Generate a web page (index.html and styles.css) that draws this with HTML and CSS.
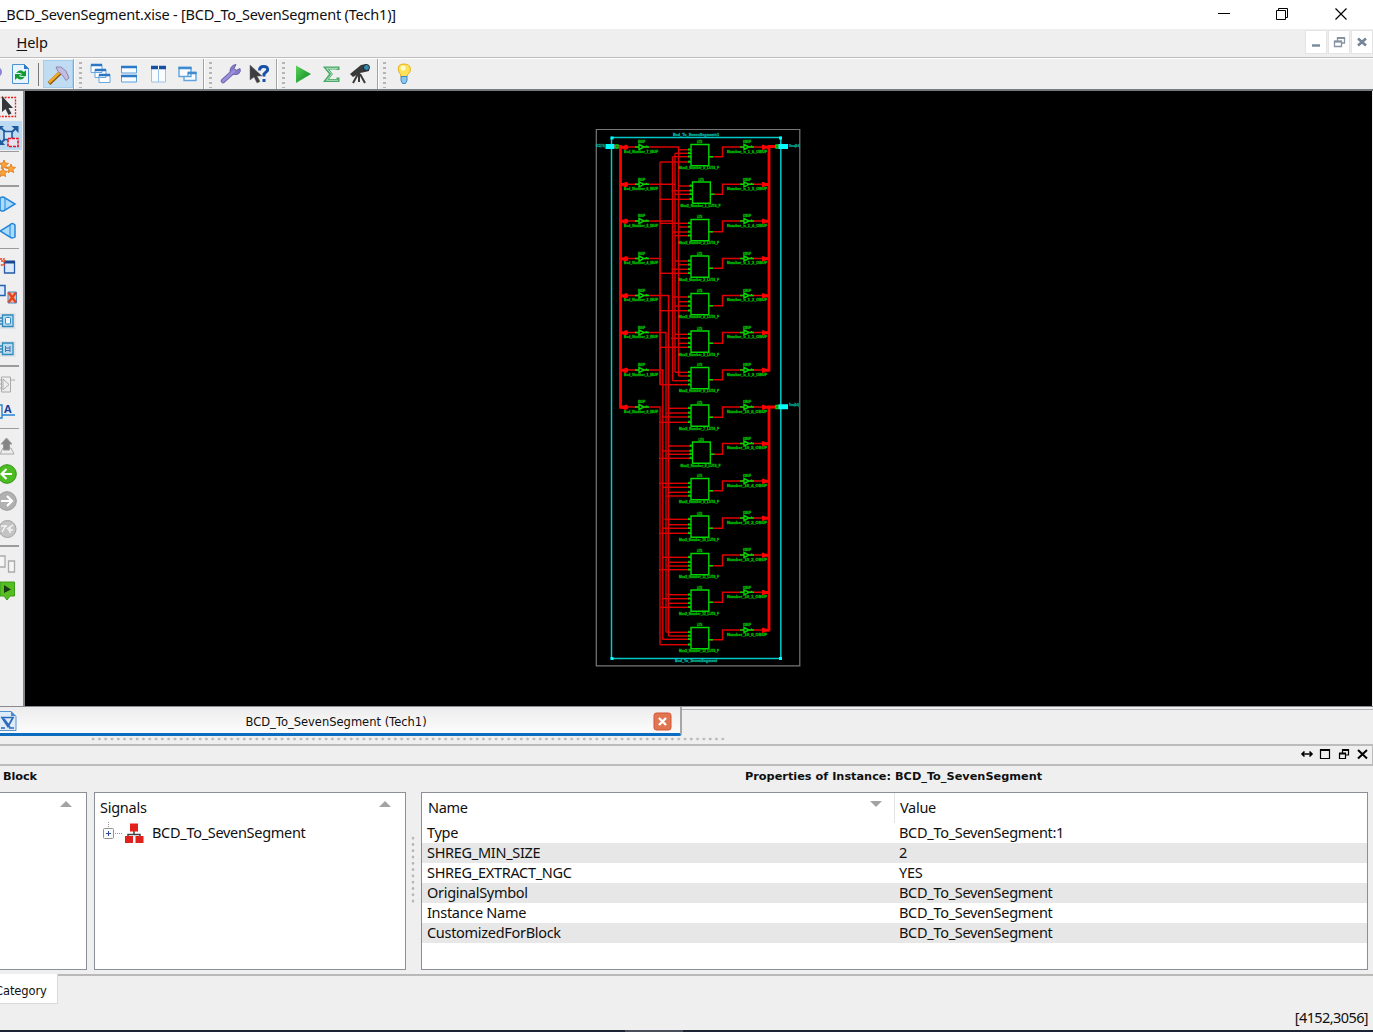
FILE: index.html
```html
<!DOCTYPE html>
<html lang="en">
<head>
<meta charset="utf-8">
<title>BCD_To_SevenSegment (Tech1)</title>
<link rel="stylesheet" href="styles.css">
</head>
<body>
<div class="app">
  <header class="titlebar">
    <span class="title">_BCD_SevenSegment.xise - [BCD_To_SevenSegment (Tech1)]</span>
    <svg class="winbtns" width="173" height="29" fill="none" stroke="#000" stroke-width="1">
      <path d="M18 13.500h12M76.500 10.500h9v9h-9zM78.500 10.500v-2h9v9h-2"/>
      <path d="M135.500 8.500l11 11M146.500 8.500l-11 11" stroke-width="1.200"/>
    </svg>
  </header>
  <nav class="menubar">
    <span class="menu"><u>H</u>elp</span>
    <div class="mdi">
      <svg width="20" height="22"><path d="M6 14.500h8" stroke="#78899a" stroke-width="2.400"/></svg>
      <svg width="20" height="22" fill="none" stroke="#8492a2" stroke-width="1.300"><path d="M5.500 10.500h7v5h-7zM8.500 10V7h7v5h-3"/><path d="M5 10.500h8M8 7h8" stroke-width="2"/></svg>
      <svg width="20" height="22"><path d="M6 7.500l8 7M14 7.500l-8 7" stroke="#758596" stroke-width="2.600"/></svg>
    </div>
  </nav>
  <div class="toolbar">
    <div class="group g1">
      <svg width="42" height="30"><circle cx="-3" cy="13" r="5" fill="#8b83d8"/><path d="M12.500 5.500h12l4 4v15h-16z" fill="#e8f4ff" stroke="#4d93d4"/><path d="M24 5v5h5z" fill="#2d78c4"/><path d="M16 14q4-5 8-1l2-2v6h-6l2-2q-3-2-6-1zM25 17q-3 6-8 2l-2 2v-6h6l-2 2q3 2 6 0z" fill="#139b31"/><path d="M38.500 4v23" stroke="#777"/></svg>
      <span class="active"><svg width="29" height="28"><path d="M5 22.500L16 12" stroke="#8c5a10" stroke-width="4"/><path d="M5 21.500L16 11" stroke="#f0aa28" stroke-width="2.600"/><path d="M12 6l5 0 5 4 3 7-3 2.500-4-6-4-3z" fill="#c3bedf" stroke="#8c86b3"/></svg></span>
    </div>
    <div class="group g2"><i class="handle"></i>
      <svg width="28" height="30" fill="#fff" stroke="#69a6de"><path d="M4 5.500h11v8H4zM8 10.500h11v8H8zM12 15.500h11v8H12z"/><path d="M4 6h11M8 11h11M12 16h11" stroke="#2c76c6" stroke-width="2.400"/></svg>
      <svg width="29" height="30" fill="#f8fcff" stroke="#5f9fdc"><path d="M6.500 8h15v6h-15zM6.500 17h15v6h-15z"/><path d="M6 8h16M6 17h16" stroke="#297ac8" stroke-width="2.400"/></svg>
      <svg width="29" height="30" fill="#f8fcff" stroke="#9ec3e8"><path d="M7.500 8h14v15h-14zM14.500 8v15"/><path d="M7 8.500h15" stroke="#1452a1" stroke-width="3.500"/><path d="M14.500 6.500v4" stroke="#fff"/></svg>
      <svg width="29" height="30" fill="#f8fcff" stroke="#63a3dd" stroke-width="1.400"><path d="M6 8.500h12v9H6zM15 13.500h8v8h-12v-4h4z"/><path d="M5.500 9h13M15 14h8.500" stroke="#3e8bd1" stroke-width="2.400"/></svg>
    </div>
    <div class="group g3"><i class="handle"></i>
      <svg width="28" height="30"><path d="M6 22L17 12" stroke="#6e66b3" stroke-width="4.600" stroke-linecap="round"/><path d="M19 5.500q-6 1-6 7 4 5 9 2 2-2 1-5l-4 2-2-2z" fill="#857bcb" stroke="#6962a9"/><path d="M6 22L17 12" stroke="#9a91da" stroke-width="2.600" stroke-linecap="round"/></svg>
      <svg width="29" height="30"><path d="M5 6v15l4-3 3 6 3-1.500-3-5.500h5z" fill="#3e3e42" stroke="#666" stroke-width=".5"/><path d="M14.500 11.500q0-4 4-4 5 0 4 4l-3.500 3.500v2.500" fill="none" stroke="#1752a8" stroke-width="3"/><path d="M17.500 20h3v3h-3z" fill="#1752a8"/></svg>
    </div>
    <div class="group g4"><i class="handle"></i>
      <svg width="28" height="30"><defs><linearGradient id="go" x2="1" y2="1"><stop stop-color="#5bd25b"/><stop offset="1" stop-color="#07871d"/></linearGradient></defs><path d="M6 6.500l15 8.500-15 9z" fill="url(#go)"/></svg>
      <svg width="29" height="30"><path d="M20 11V9H8l5 6-5 6.500H20V18.500" fill="none" stroke="#4ba96a" stroke-width="3"/><path d="M20 9.300H8.500l5.200 5.700-5.200 6.300H20" fill="none" stroke="#b3e3c1"/></svg>
      <svg width="29" height="30"><path d="M3 15l11-9 5-1 3 3v4l-4 1-5 1-7 4z" fill="#37393b"/><circle cx="19.500" cy="8.500" r="3" fill="#328bb0" stroke="#222"/><path d="M12 14v9M11 15l-5 9M13 15l5 9" stroke="#3b3b3b" stroke-width="2"/></svg>
    </div>
    <div class="group g5"><i class="handle"></i>
      <svg width="29" height="30"><path d="M10 18q0-3-2-5-3-8 5-8 8 0 6 8-3 2-3 5z" fill="#ffe15a" stroke="#e4b21e"/><circle cx="12" cy="9" r="2.500" fill="#fffbd0"/><path d="M10 17.500h6v4l-1.500 3h-3l-1.500-3z" fill="#8cc6ee" stroke="#4089c2"/></svg>
    </div>
  </div>
  <div class="workspace">
    <aside class="side">
      <svg class="tall" viewBox="0 0 24 29"><path d="M-5 5.500h20.500v19H-5" fill="none" stroke="#f01818" stroke-width="1.300" stroke-dasharray="2 1.200"/><path d="M2 4v16l3.500-3 3 6 3-1.500L8.500 16H13z" fill="#33363a"/></svg>
      <svg class="tall on" viewBox="0 0 22 29"><path d="M1 7l16 14M17 6L1 22" stroke="#205a9e" stroke-width="1.800"/><path d="M4 10.500h8v8H4z" fill="#cfe4f8" stroke="#205a9e" stroke-width="1.600"/><path d="M11.500 5h7v7zM-1 5h5l-5 5zM-1 24v-7l6 7z" fill="#205a9e"/><path d="M8 17.500h10v8H8z" fill="#e9e3f0" stroke="#e51522" stroke-width="1.600" stroke-dasharray="3 1"/></svg>
      <hr class="thin">
      <svg viewBox="0 0 24 27.500"><g fill="#fba536" stroke="#dc7413" stroke-width=".8"><path id="star" d="M4 5l1.200 3 3.300.4-2.600 2 .8 3.200L4 12l-2.800 1.600.8-3.200-2.600-2L2.800 8z"/><use href="#star" x="7" y="4"/><use href="#star" x="-1" y="8"/></g></svg>
      <hr>
      <svg viewBox="0 0 24 27.500"><path d="M0 8q3-2 5 0l10 6-10 6q-2 2-5 0z" fill="#a9dbfa" stroke="#2485d8" stroke-width="1.500"/><path d="M5 8v12" stroke="#2485d8"/></svg>
      <svg viewBox="0 0 24 27.500"><path d="M15 8q-3-3-5 0L0 14l10 6q2 2 5 0z" fill="#a9dbfa" stroke="#2485d8" stroke-width="1.500"/><path d="M10 8v12" stroke="#2485d8"/></svg>
      <hr>
      <svg viewBox="0 0 24 27.500"><path d="M4.500 10h10v11h-10z" fill="#dbe9fb" stroke="#275ba6" stroke-width="1.300"/><path d="M4 10h11" stroke="#174795" stroke-width="3"/><path d="M0 7h4v6H0M1 9h5" fill="none" stroke="#e5401c" stroke-width="1.600" stroke-dasharray="2 .8"/></svg>
      <svg viewBox="0 0 24 27.500"><path d="M-2 5.500h7v10h-7z" fill="#dceafb" stroke="#2261b3" stroke-width="1.500"/><path d="M8 12h8.500v11H8z" fill="#f3b59f" stroke="#438acd"/><path d="M8.500 12.500l7.500 10M16 12.500l-7.500 10" stroke="#e8441d" stroke-width="2.400"/></svg>
      <svg viewBox="0 0 24 27.500"><path d="M0 6h15.500v16H0z" fill="#dde2e6"/><path d="M2.500 8h10.500v11.500H2.500zM0 11h3M0 14h3M0 17h3" fill="#b8dcf1" stroke="#3189bb" stroke-width="1.300"/><rect x="5.500" y="10.500" width="5" height="6.500" rx="1" fill="#eef8ff" stroke="#3189bb"/></svg>
      <svg viewBox="0 0 24 27.500"><path d="M0 6h15.500v16H0z" fill="#dde2e6"/><path d="M2.500 8h10.500v11.500H2.500zM0 11h3M0 14h3M0 17h3" fill="#b8dcf1" stroke="#3189bb" stroke-width="1.300"/><path d="M5.500 11v6M10 11v6M6 13h4M6 15.500h4" stroke="#4d72ac"/></svg>
      <hr>
      <svg viewBox="0 0 24 27.500"><path d="M1.500 7h9v15h-9zM0 10h2M0 14h2M0 18h2M11 10h4M3 9l6 5.500L3 20z" fill="#eee" stroke="#aaa"/></svg>
      <svg viewBox="0 0 24 27.500"><path d="M-2 8h4v13h-4M2 18h13" fill="none" stroke="#2384d4" stroke-width="1.400"/><text class="glyph" x="4" y="15.500">A</text></svg>
      <hr>
      <svg viewBox="0 0 24 27.500"><path d="M0 22l3-6h8l3 6z" fill="#eee" stroke="#aaa"/><path d="M6.500 6l5.500 6H9.500v6h-6v-6H1z" fill="#858585" stroke="#999"/></svg>
      <svg viewBox="0 0 24 27.500"><circle cx="7" cy="14" r="9.300" fill="#4cbd21" stroke="#2f9414"/><path d="M12 14H2M6.500 9L1.500 14l5 5" fill="none" stroke="#fff" stroke-width="2.200"/></svg>
      <svg viewBox="0 0 24 27.500"><circle cx="7" cy="14" r="9.300" fill="#b1b1b1" stroke="#999"/><path d="M1 14h10M7 9l5 5-5 5" fill="none" stroke="#fff" stroke-width="2.200"/></svg>
      <svg viewBox="0 0 24 27.500"><circle cx="7.500" cy="14" r="8.500" fill="#c4c4c4" stroke="#a5a5a5"/><path d="M1 11h6M6 10l-4 7M7 14l6-4M8 15h5M10 12v6" fill="none" stroke="#f4f4f4" stroke-width="1.500"/></svg>
      <hr>
      <svg viewBox="0 0 24 27.500" fill="#f5f5f5" stroke="#aaa" stroke-width="1.300"><path d="M-2 6h7v11h-7zM8.500 11h6v11h-6z"/></svg>
      <svg viewBox="0 0 24 27.500"><path d="M0 5h14.500v14H10l-3 4-3-4H0z" fill="#56be22" stroke="#3c9a1a"/><path d="M4 8l7 4.500L4 16z" fill="#193c17"/></svg>
    </aside>
    <main class="canvas"><svg id="schematic" width="1347" height="614" viewBox="25 92 1347 614"></svg></main>
  </div>
  <div class="tabs">
    <div class="tab">
      <svg width="20" height="22"><path d="M-2 1.500h13l5 5v14H-2z" fill="#deebf8" stroke="#5a94d0"/><path d="M11 1l5 5h-5z" fill="#4e8acb"/><path d="M2 7.500h11l-5 9zM1 18h4M9 18h5M4 9l6 8" fill="none" stroke="#2c6bbb" stroke-width="1.700"/></svg>
      <span class="tabname">BCD_To_SevenSegment (Tech1)</span>
      <svg width="19" height="19"><rect x="1" y="1" width="17" height="17" rx="2.500" fill="#e07552" stroke="#d55334"/><path d="M6 6l7 7M13 6l-7 7" stroke="#fff" stroke-width="2.400"/></svg>
    </div>
  </div>
  <div class="splitter"></div>
  <div class="dockbar">
    <svg width="72" height="18" fill="none" stroke="#000" stroke-width="1.600"><path d="M2 8h10M4.500 5.500L2 8l2.500 2.500M9.500 5.500L12 8l-2.500 2.500"/><path d="M20.500 3.500h9v9h-9z" stroke-width="1.200"/><path d="M20 4h10" stroke-width="2"/><path d="M39.500 7.500h6v5h-6zM42.500 7V3.500h6v5.500h-3" stroke-width="1.200"/><path d="M39 7.500h7M42 4h7" stroke-width="2"/><path d="M58 4l9 8.500M67 4l-9 8.500" stroke-width="2"/></svg>
  </div>
  <div class="headings"><b class="hblock">Block</b><b class="hprops">Properties of Instance: BCD_To_SevenSegment</b></div>
  <div class="panels">
    <section class="panel p1"><i class="up"></i></section>
    <section class="panel p2">
      <div class="phead"><span class="signals">Signals</span><i class="up"></i></div>
      <div class="tree">
        <svg width="50" height="24"><path d="M13.500 0v5M20 11.500h7" stroke="#999" stroke-dasharray="1 1"/><rect x="8.500" y="6.500" width="10" height="10" rx="1" fill="#fafafa" stroke="#929292"/><path d="M11 11.500h5M13.500 9v5" stroke="#2d4aa0"/><path d="M39 8v5M33 16v-3.500h12V16" fill="none" stroke="#444" stroke-width="1.500"/><path d="M35 1.500h8v8h-8zM30 14h8v7h-8zM40.500 14h8v7h-8z" fill="#e2211d"/></svg>
        <span class="inst">BCD_To_SevenSegment</span>
      </div>
    </section>
    <div class="vsplit"></div>
    <section class="panel p3">
      <div class="row head"><span class="name">Name</span><i class="down"></i><span class="val">Value</span></div>
      <div class="row"><span class="c1">Type</span><span>BCD_To_SevenSegment:1</span></div>
      <div class="row alt"><span class="c1">SHREG_MIN_SIZE</span><span>2</span></div>
      <div class="row"><span class="c1">SHREG_EXTRACT_NGC</span><span>YES</span></div>
      <div class="row alt"><span class="c1">OriginalSymbol</span><span>BCD_To_SevenSegment</span></div>
      <div class="row"><span class="c1">Instance Name</span><span>BCD_To_SevenSegment</span></div>
      <div class="row alt"><span class="c1">CustomizedForBlock</span><span>BCD_To_SevenSegment</span></div>
    </section>
  </div>
  <div class="bottomtabs"><span class="cat">Category</span></div>
  <footer class="status">[4152,3056]</footer>
  <div class="taskbar"></div>
</div>
<script src="schematic.js"></script>
</body>
</html>
```
FILE: styles.css
```css
* { box-sizing: border-box; }
body { margin: 0; background: #efefef; color: #101010; font: 14.5px/20px "Noto Sans", "Open Sans", sans-serif; overflow: hidden; }
svg { display: block; flex: none; }
.app { display: flex; flex-direction: column; width: 1373px; height: 1032px; white-space: nowrap; overflow: hidden; }
.titlebar { display: flex; justify-content: space-between; height: 29px; background: #fff; }
.title { line-height: 29px; font-size: 14.5px; letter-spacing: -.2px; }
.menubar { display: flex; justify-content: space-between; height: 30px; padding-left: 16.5px; border-bottom: 1px solid #fff; box-shadow: inset 0 -1px #bdbdbd; }
.menu { line-height: 26px; letter-spacing: -.1px; }
.menu u { text-underline-offset: 2px; }
.mdi { display: flex; gap: 3px; padding-top: 2px; margin-right: 1px; }
.mdi svg { background: #fff; outline: 1px solid #e4e4e4; }
.toolbar { display: flex; height: 32px; border-bottom: 2px solid #777b80; }
.group { display: flex; height: 30px; border-right: 1px solid #a2a2a2; border-left: 1px solid #fff; }
.g1 { width: 74px; border-left: 0; }
.g2 { width: 130px; }
.g3 { width: 73px; }
.g4 { width: 101px; }
.g5 { flex: 1; border-right: 0; }
.active { width: 30px; height: 28px; margin: 1px 0 0 1px; background: #c0dcf3; border: 1px solid #a5cdec; }
.handle { flex: none; width: 3px; height: 27px; margin: 2px 5px 0 4px; background: radial-gradient(circle at 1.5px 2px, #b5b5b5 1.2px, transparent 1.3px) 0 0 / 3px 5px; }
.workspace { display: flex; height: 615px; }
.side { width: 25px; padding-top: .5px; border-right: 2px solid #85888c; overflow: hidden; }
.side svg { width: 24px; height: 27.5px; }
.side .tall { height: 29px; }
.side .on { background: #bcdaf2; width: 22px; height: 29px; }
.side hr { width: 19px; height: 1.5px; margin: 3px 0; border: 0; background: #9b9b9b; }
.side .thin { margin: 1px 0 2.5px; }
.glyph { font: bold 11px "Open Sans", sans-serif; fill: #183f9b; }
.canvas { width: 1347px; padding-top: 1px; background: #000; }
.tabs { height: 31px; border-top: 1px solid #8a8a90; background: linear-gradient(#f0f0f0 2px, #b4b4b8 2px, #b4b4b8 3px, #efefef 3px); }
.tab { display: flex; align-items: center; width: 682px; height: 29px; padding: 2px 8px 0 0; background: linear-gradient(#ececec, #fafafa 85%); border-right: 2px solid #a6a6a6; border-bottom: 3px solid #0c6dc0; border-bottom-right-radius: 3px; }
.tabname { flex: 1; padding-left: 225.5px; padding-top: 2px; font: 11.5px/20px "DejaVu Sans", sans-serif; letter-spacing: 0; }
.splitter { width: 636px; height: 7px; margin-left: 91px; background: radial-gradient(circle at 2px 2px, #b9b9b9 1.1px, transparent 1.7px) 0 0 / 6.3px 5px repeat-x; }
.dockbar { display: flex; justify-content: flex-end; height: 22px; border: solid #bcbcbc; border-width: 2px 1px 2px 0; }
.headings { display: flex; height: 26px; padding-left: 3px; font: bold 11.3px/22px "DejaVu Sans", sans-serif; }
.hblock { width: 742px; letter-spacing: -.1px; }
.hprops { letter-spacing: 0; }
.panels { display: flex; height: 178px; }
.panel { height: 178px; background: #fff; border: 1.5px solid #8b8f98; }
.p1 { width: 87px; border-left: 0; margin-right: 7px; padding: 8px 14px; display: flex; justify-content: flex-end; }
.p2 { width: 312px; }
.up, .down { flex: none; width: 12px; height: 6px; background: #a3a3a3; clip-path: polygon(50% 0, 100% 100%, 0 100%); }
.down { clip-path: polygon(0 0, 100% 0, 50% 100%); }
.phead { display: flex; justify-content: space-between; height: 29px; padding: 4px 14px 0 5px; }
.phead .up { margin-top: 4px; }
.signals { letter-spacing: -.25px; }
.tree { display: flex; height: 24px; }
.inst { padding-left: 7px; letter-spacing: -.3px; }
.vsplit { width: 15px; height: 70px; margin-top: 43px; background: radial-gradient(circle at 7px 3px, #b6b6b6 1.1px, transparent 1.7px) 0 0 / 15px 6.3px; }
.p3 { width: 947px; }
.row { display: flex; height: 20px; padding-left: 5px; line-height: 18px; letter-spacing: -.3px; }
.c1 { width: 472px; }
.alt { background: #e7e7e7; }
.head { height: 30px; padding: 5px 0 0 6px; }
.name { width: 442px; }
.head .down { margin-top: 3px; }
.val { margin: -5px 0 0 12px; padding: 5px 0 0 5px; border-left: 1px solid #e3e3e3; }
.bottomtabs { height: 35px; margin-top: 4px; background: linear-gradient(#b9b9b9 2px, #efefef 2px); }
.cat { display: block; width: 58px; height: 30px; padding-top: 6px; background: #fff; border: solid #d9d9d9; border-width: 0 1px 1px 0; font: 11.5px/22px "DejaVu Sans", sans-serif; letter-spacing: -.1px; text-indent: -5px; }
.status { flex: 1; padding: 0 5px 0 0; text-align: right; line-height: 16px; letter-spacing: -.6px; }
.taskbar { height: 2px; background: linear-gradient(90deg, #1c2436 625px, #4a4e5b 625px, #4a4e5b 683px, #1c2436 683px); }
.wire { fill: none; stroke: #e00000; stroke-width: 1.4; }
.bus { fill: none; stroke: #f00; stroke-width: 2.8; }
.part { fill: #000; stroke: #00d800; stroke-width: 1.4; }
.tap { fill: #f00; }
.tiny { fill: #00d000; stroke: #00a800; stroke-width: .35; font: bold 3.7px "Liberation Sans", sans-serif; }
.net { fill: #00c6b0; stroke: #00a890; stroke-width: .3; font: bold 4px "Liberation Sans", sans-serif; }
.sheet { fill: none; stroke: #777; stroke-width: 1.2; }
.module { fill: none; stroke: #00c8c8; stroke-width: 1.5; }
.port { fill: #0ff; }
```
FILE: schematic.js
```js
// Netlist drawing: input buffers, look-up tables and output buffers, one per row.
const out = [];
const line = (cls, d) => out.push(`<path class="${cls}" d="${d}"/>`);
const label = (cls, x, y, w, s) =>
  out.push(`<text class="${cls}" x="${x}" y="${y}" textLength="${w}" lengthAdjust="spacingAndGlyphs">${s}</text>`);

const rowY = [147, 184.3, 221, 258.5, 295.5, 332.5, 370, 407, 443.5, 481, 518, 555, 592.3, 630];
const lutTop = [144.5, 182, 219.5, 256, 293.5, 331, 367.5, 405, 442, 478.5, 516, 553.5, 590, 627.5];
// [y, x] of each look-up table input wire
const pins = [
  [[149.7, 678.5], [153.3, 675], [156.7, 672.5], [162, 660]],
  [[186, 678.5], [190.7, 671.5], [194.3, 675], [199.3, 659]],
  [[223.3, 660], [227, 678.5], [232, 672.5], [235.7, 675]],
  [[261, 675], [264.7, 678.5], [269.3, 671.5], [273.3, 660]],
  [[297, 672.5], [301.7, 678.5], [306, 675], [310.7, 659]],
  [[334.3, 675], [338.3, 671], [343.3, 678.5], [347.3, 659]],
  [[372.3, 675], [376, 678.5], [380.7, 672.5], [384.7, 660]],
  [[408.3, 668.5], [413, 666.5], [417, 662.5], [422.3, 659]],
  [[446, 668.5], [451, 662.5], [454.3, 666.5], [458.3, 659]],
  [[483.3, 659], [487.3, 662.5], [492.3, 668.5], [496, 666.5]],
  [[519.3, 664.5], [524.7, 668.5], [528.3, 662.5], [533.3, 659]],
  [[557.3, 662.5], [562.3, 668.5], [566, 666.5], [569.7, 659]],
  [[594.7, 666.5], [598.7, 662.5], [603.3, 668.5], [607.3, 660]],
  [[632.3, 666.5], [636, 668.5], [639.3, 662.5], [644.7, 660]]
];
// [x, bottom] of the vertical run fed by each input buffer
const runs = [[678.5, 376], [675, 372.3], [672.5, 380.7], [660, 384.7], [668.5, 636], [666, 632.3], [662.8, 639.3], [660, 644.7]];

line('sheet', 'M596.3 129.500h203.500v536.300h-203.500z');
line('module', 'M611.500 137.500h169.300v521h-169.300z');
out.push('<path class="port" d="M610.500 136.500h3v3h-3zM779 136.500h3v3h-3zM610.500 657h3v3h-3zM779 657h3v3h-3z"/>');
label('net', 673, 135.5, 46, 'Bcd_To_SevenSegment:1');
label('net', 675, 662, 42, 'Bcd_To_SevenSegment');
line('wire', 'M660 162V384.700M672.500 156.700V221M675 153.300V184');

runs.forEach(([x, bottom], i) => {
  const y = rowY[i];
  line('wire', `M628 ${y}H${x}V${bottom}`);
});
pins.forEach((list, i) => {
  const shift = i === 1 || i === 8 ? 1.5 : 0;
  const x = 691 + shift, top = lutTop[i], y = rowY[i];
  list.forEach(([py, px]) => {
    line('wire', `M${px} ${py}H${x - 2}`);
    line('part', `M${x - 3} ${py}h3M${x - 2} ${py - 1.5}v1.500`);
  });
  line('wire', `M${x + 19} ${top + 12.3}H722.500V${y}H768`);
  line('part', `M${x} ${top}h17.800v21.300h-17.800zM${x + 18} ${top + 12.3}h4`);
  label('tiny', x + 6, top - 1.5, 5, 'LUT4');
  label('tiny', x - 12, top + 24.7, 40, `Mux2_Number_${i}_LUT4_F`);
  buffer(740, y);
  label('tiny', 743, y - 3.7, 8, 'OBUF');
  label('tiny', 727, y + 5.7, 40, i < 7 ? `Number_o_1_${6 - i}_OBUF` : `Number_10_${13 - i}_OBUF`);
  out.push(`<path class="tap" d="M762 ${y - 2.2}h2l1 1h4v3h-4l-1 1h-2z"/>`);
});
for (let i = 0; i < 8; i++) {
  const y = rowY[i];
  buffer(635, y);
  label('tiny', 638, y - 3.7, 7, 'IBUF');
  label('tiny', 624, y + 5.7, 34, `Bcd_Number_${7 - i}_IBUF`);
  out.push(`<path class="tap" d="M620 ${y - 1.3}h4l1-1h2l1 1v3l-2 1h-2l-1-1h-3z"/>`);
}
function buffer(x, y) {
  line('part', `M${x} ${y}h4M${x + 9} ${y}h5M${x + 4} ${y - 2.5}v5l5-2.500zM${x + 11.5} ${y - 1.5}v1`);
}
line('bus', 'M613 146.500H620.500V407H624');
line('bus', 'M779 146.500H769V371.500');
line('bus', 'M779 407H769V631');
out.push('<path class="part" d="M616 145h2v3h-2zM776 145h2v3h-2zM776 405.500h2v3h-2z"/>');
out.push('<path class="port" d="M605.500 144h9v5h-9zM778.500 144h9.500v5h-9.500zM778.500 404.300h9.500v5h-9.500z"/>');
label('net', 596, 147, 9, 'BCD(7:0)');
label('net', 789, 147, 11, 'Ones(6:0)');
label('net', 789, 406, 10, 'Tens(6:0)');
document.getElementById('schematic').innerHTML = out.join('');
```
